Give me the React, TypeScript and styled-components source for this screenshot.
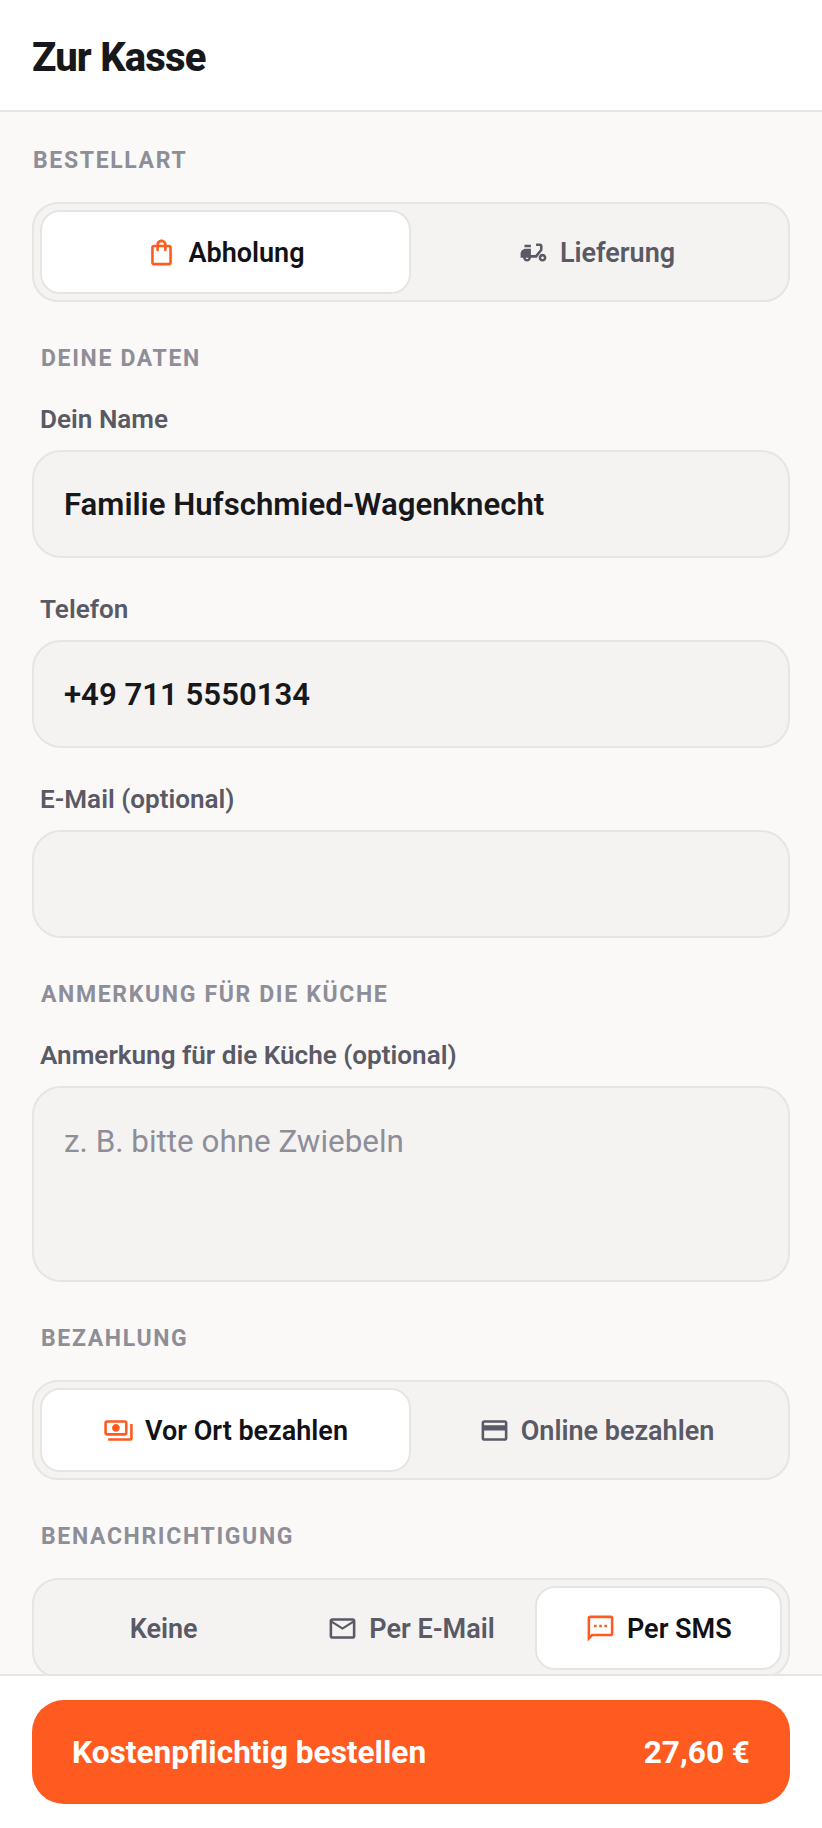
import React from 'react';
import styled, { createGlobalStyle } from 'styled-components';
import {
    MdMoped,
    MdOutlineCreditCard,
    MdOutlineMailOutline,
    MdOutlinePayments,
    MdOutlineShoppingBag,
    MdOutlineSms,
} from 'react-icons/md';

const GlobalStyle = createGlobalStyle`
    html, body {
        margin: 0;
        padding: 0;
        background: #faf9f7;
        font-family: Roboto, "Liberation Sans", sans-serif;
    }
    * { box-sizing: border-box; }
`;

const Page = styled.div`
    width: 822px;
    height: 1828px;
    display: flex;
    flex-direction: column;
    overflow: hidden;
    background: #faf9f7;
`;

const Header = styled.header`
    flex: none;
    height: 112px;
    padding: 5px 32px 0;
    display: flex;
    align-items: center;
    background: #fff;
    border-bottom: 2px solid #e7e5e1;
`;

const Title = styled.h1`
    margin: 0;
    font-size: 40px;
    font-weight: 800;
    letter-spacing: -0.8px;
    color: #18181b;
`;

const Content = styled.main`
    flex: 1;
    min-height: 0;
    overflow: hidden;
    padding: 32px 32px 0;
`;

const SectionTitle = styled.div<{ $inset?: boolean; $top?: number }>`
    height: 32px;
    line-height: 34px;
    margin-top: ${(p) => p.$top ?? 0}px;
    padding-left: ${(p) => (p.$inset ? '9px' : '1px')};
    font-size: 23px;
    font-weight: 700;
    letter-spacing: 1.65px;
    color: #8e8e98;
`;

const Segments = styled.div<{ $cols: number; $top: number; $bottom: number }>`
    display: grid;
    grid-template-columns: repeat(${(p) => p.$cols}, 1fr);
    height: 100px;
    margin: ${(p) => p.$top}px 0 ${(p) => p.$bottom}px;
    padding: 6px;
    background: #f4f3f2;
    border: 2px solid #e7e5e2;
    border-radius: 26px;
`;

const Segment = styled.div<{ $active?: boolean }>`
    display: flex;
    align-items: center;
    justify-content: center;
    gap: 11px;
    padding-top: 1px;
    font-size: 27px;
    font-weight: 600;
    border-radius: 20px;
    color: ${(p) => (p.$active ? '#121216' : '#5a5a66')};
    background: ${(p) => (p.$active ? '#fff' : 'transparent')};
    border: 2px solid ${(p) => (p.$active ? '#e7e5e2' : 'transparent')};
    svg {
        flex: none;
        width: 31px;
        height: 31px;
        color: ${(p) => (p.$active ? '#ff5a1f' : '#5a5a66')};
    }
`;

const FieldLabel = styled.div<{ $top: number }>`
    height: 32px;
    line-height: 32px;
    margin-top: ${(p) => p.$top}px;
    padding-left: 8px;
    font-size: 26.1px;
    font-weight: 600;
    color: #5a5a66;
`;

const Field = styled.div<{ $tall?: boolean; $muted?: boolean }>`
    height: ${(p) => (p.$tall ? '196px' : '108px')};
    margin-top: 15px;
    padding: ${(p) => (p.$tall ? '35px 30px 0' : '2px 30px 0')};
    display: flex;
    align-items: ${(p) => (p.$tall ? 'flex-start' : 'center')};
    font-size: 31.15px;
    font-weight: ${(p) => (p.$muted ? 400 : 600)};
    line-height: 38px;
    color: ${(p) => (p.$muted ? '#8e8e98' : '#18181b')};
    background: #f4f3f2;
    border: 2px solid #e7e5e2;
    border-radius: 29px;
`;

const Placeholder = styled.span`
    font-size: 31.4px;
`;

const Footer = styled.footer`
    flex: none;
    height: 154px;
    padding: 24px 32px 0;
    background: #fff;
    border-top: 2px solid #e7e5e1;
`;

const OrderButton = styled.div`
    height: 104px;
    padding: 0 40px;
    display: flex;
    align-items: center;
    justify-content: space-between;
    font-size: 31.6px;
    font-weight: 700;
    color: #fff;
    background: #ff5a1f;
    border-radius: 32px;
`;

const App = () => {
    return (
        <Page>
            <GlobalStyle />
            <Header>
                <Title>Zur Kasse</Title>
            </Header>
            <Content>
                <SectionTitle>BESTELLART</SectionTitle>
                <Segments $cols={2} $top={26} $bottom={40}>
                    <Segment $active>
                        <MdOutlineShoppingBag />
                        Abholung
                    </Segment>
                    <Segment>
                        <MdMoped />
                        Lieferung
                    </Segment>
                </Segments>
                <SectionTitle $inset>DEINE DATEN</SectionTitle>
                <FieldLabel $top={29}>Dein Name</FieldLabel>
                <Field>Familie Hufschmied-Wagenknecht</Field>
                <FieldLabel $top={35}>Telefon</FieldLabel>
                <Field>+49 711 5550134</Field>
                <FieldLabel $top={35}>E-Mail (optional)</FieldLabel>
                <Field />
                <SectionTitle $inset $top={40}>
                    ANMERKUNG FÜR DIE KÜCHE
                </SectionTitle>
                <FieldLabel $top={29}>Anmerkung für die Küche (optional)</FieldLabel>
                <Field $tall $muted>
                    <Placeholder>z. B. bitte ohne Zwiebeln</Placeholder>
                </Field>
                <SectionTitle $inset $top={40}>
                    BEZAHLUNG
                </SectionTitle>
                <Segments $cols={2} $top={26} $bottom={40}>
                    <Segment $active>
                        <MdOutlinePayments />
                        Vor Ort bezahlen
                    </Segment>
                    <Segment>
                        <MdOutlineCreditCard />
                        Online bezahlen
                    </Segment>
                </Segments>
                <SectionTitle $inset>BENACHRICHTIGUNG</SectionTitle>
                <Segments $cols={3} $top={26} $bottom={0}>
                    <Segment>Keine</Segment>
                    <Segment>
                        <MdOutlineMailOutline />
                        Per E-Mail
                    </Segment>
                    <Segment $active>
                        <MdOutlineSms />
                        Per SMS
                    </Segment>
                </Segments>
            </Content>
            <Footer>
                <OrderButton>
                    <span>Kostenpflichtig bestellen</span>
                    <span>27,60 €</span>
                </OrderButton>
            </Footer>
        </Page>
    );
};

export default App;
